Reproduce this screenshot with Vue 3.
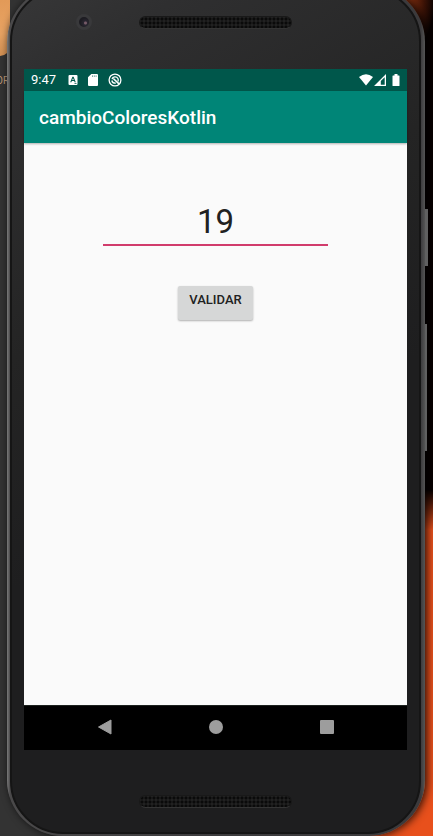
<script setup>
import { ref } from 'vue'

const value = ref('19')
</script>

<template>
  <div class="desktop">
    <div class="glow glow-top"></div>
    <div class="glow glow-bottom"></div>
    <div class="shortcut-icon"></div>
    <span class="shortcut-label">OR</span>

    <div class="phone">
      <div class="side-key power"></div>
      <div class="side-key volume"></div>
      <div class="body">
        <div class="bezel-top">
          <div class="camera"></div>
          <div class="speaker"></div>
        </div>

        <div class="screen">
          <header class="status">
            <span class="clock">9:47</span>
            <svg class="ic" width="10" height="12" viewBox="0 0 10 12">
              <path fill="#fff" fill-rule="evenodd" d="M1.500 1h7q1 0 1 1v8q0 1-1 1h-7q-1 0-1-1V2q0-1 1-1zM4.400 2.800 2.200 8.200h1.200l.4-1.200h2.400l.4 1.200h1.200L5.600 2.800zM5 4.200l.8 1.900H4.200zM6.500 9.200v.8h2v-.8z" />
            </svg>
            <svg class="ic" width="10" height="12" viewBox="0 0 10 12">
              <path fill="#fff" d="M3.300 0H9q1 0 1 1v10q0 1-1 1H1q-1 0-1-1V3.300z" />
              <path stroke="#5d938b" stroke-width=".8" d="M4.500 1.300v1.700M6.300 1.300v1.700M8.100 1.300v1.700" />
            </svg>
            <svg class="ic" width="14" height="14" viewBox="0 0 14 14" fill="none" stroke="#fff">
              <circle cx="7" cy="7" r="5.900" stroke-width="1.300" />
              <path stroke-width="1.300" d="M4 6.200a3.200 3.200 0 0 1 5.900-.7 3.200 3.200 0 0 1 0 3" />
              <path stroke-width="1.600" d="M5.300 5.500 11 10.800" />
              <path stroke-width="1.300" d="M3.800 7.500q.8 2.900 4 2.700" />
            </svg>
            <span class="spacer"></span>
            <svg width="41" height="14" viewBox="0 0 41 14">
              <path fill="#fff" d="M0 4Q7-1.600 14 4L7 12.500z" />
              <path fill="#fff" fill-rule="evenodd" d="M27 1v12H15zM25.700 4.200 21.800 8v3.800h3.900z" />
              <path fill="#fff" d="M35.500 1h3v1.500H40q.5 0 .5.500v9.500q0 .5-.5.500h-6q-.5 0-.5-.5V3q0-.5.500-.5h1.500z" />
            </svg>
          </header>

          <div class="appbar"><h1>cambioColoresKotlin</h1></div>

          <main class="content">
            <input v-model="value" class="field" type="text" inputmode="numeric" aria-label="Valor" />
            <button class="validate" type="button">VALIDAR</button>
          </main>

          <nav class="navbar">
            <button type="button" aria-label="Back">
              <svg width="16" height="16" viewBox="0 0 16 16">
                <path d="M1.500 8 14 1v14z" fill="#9d9d9d" stroke="#9d9d9d" stroke-linejoin="round" />
              </svg>
            </button>
            <button type="button" aria-label="Home">
              <svg width="16" height="16" viewBox="0 0 16 16"><circle cx="8" cy="8" r="7" fill="#9d9d9d" /></svg>
            </button>
            <button type="button" aria-label="Recents">
              <svg width="16" height="16" viewBox="0 0 16 16"><rect x="1" y="1" width="14" height="14" rx="1" fill="#9d9d9d" /></svg>
            </button>
          </nav>
        </div>

        <div class="bezel-bottom"><div class="speaker"></div></div>
      </div>
    </div>
  </div>
</template>

<style>
body {
  margin: 0;
  background: #070101;
}
</style>

<style scoped>
* {
  box-sizing: border-box;
}

.desktop {
  position: relative;
  display: flex;
  min-height: 100vh;
  padding: 0 8px 0 7px;
  overflow: hidden;
  background: linear-gradient(90deg, #333 0 50%, #070101 50%);
  font-family: Roboto, sans-serif;
}

.glow {
  position: absolute;
  right: 0;
}

.glow-top {
  top: 0;
  width: 48px;
  height: 50px;
  background: radial-gradient(ellipse at 40% 0, #a83d13, #3a1206 50%, transparent 75%);
}

.glow-bottom {
  top: 490px;
  bottom: 0;
  width: 100px;
  background: #e8501c;
  mask-image: linear-gradient(transparent, #000 40px);
}

.shortcut-icon {
  position: absolute;
  top: 0;
  left: 0;
  width: 10px;
  height: 56px;
  border-radius: 0 0 10px 0;
  background: linear-gradient(#e29a58, #e8a363 60%, #d29053);
}

.shortcut-label {
  position: absolute;
  top: 74px;
  left: -4px;
  color: #c09a78;
  font-size: 10px;
  line-height: 13px;
}

.phone {
  position: relative;
  display: flex;
  flex: 1;
  min-width: 0;
  margin-top: -14px;
  padding: 2px 4px 2px 3px;
  border-radius: 56px;
  background: linear-gradient(90deg, #7a7a7a, #4a494a 3px, #3d3c3e 50%, #3b3a3c 99%, #555);
  box-shadow: 2px 0 9px rgba(0, 0, 0, 0.85);
}

.side-key {
  position: absolute;
  left: 100%;
  background: #606060;
}

.power {
  top: 223px;
  width: 3px;
  height: 57px;
}

.volume {
  top: 338px;
  width: 2px;
  height: 127px;
}

.body {
  display: flex;
  flex: 1;
  flex-direction: column;
  min-width: 0;
  padding: 0 12px;
  border: 2px solid #151515;
  border-radius: 53px;
  background: linear-gradient(150deg, #373738 0, #2f2f30 90px, #242424 320px, #1e1e1f 520px);
}

.bezel-top {
  position: relative;
  display: flex;
  justify-content: center;
  height: 79px;
  padding-top: 26px;
}

.camera {
  position: absolute;
  top: 24px;
  left: 52px;
  width: 16px;
  height: 16px;
  border: 3px solid #39393b;
  border-radius: 50%;
  background: radial-gradient(circle at 65% 60%, #765b68 0 1px, #292631 2px, #1d1c22 5px);
}

.speaker {
  width: 153px;
  height: 13px;
  border: 1px solid #191919;
  border-bottom-color: #343434;
  border-radius: 7px;
  background: radial-gradient(circle, #0a0a0a 1px, transparent 2px) 0 0 / 4px 4px, #212121;
}

.screen {
  display: flex;
  flex: 1;
  flex-direction: column;
  background: #fafafa;
}

.status {
  display: flex;
  align-items: center;
  height: 22px;
  padding: 0 7px;
  background: #00574b;
  color: #fff;
}

.clock {
  margin-right: 12px;
  font-size: 13px;
  line-height: 22px;
}

.ic {
  margin-right: 10px;
}

.spacer {
  flex: 1;
}

.appbar {
  display: flex;
  align-items: center;
  height: 52px;
  padding: 2px 15px 0;
  background: #008577;
  box-shadow: 0 1px 2px rgba(0, 0, 0, 0.3);
}

h1 {
  margin: 0;
  color: #fff;
  font-size: 19px;
  font-weight: 500;
  line-height: 24px;
}

.content {
  display: flex;
  flex: 1;
  flex-direction: column;
  align-items: center;
  padding-top: 56px;
}

.field {
  width: 225px;
  height: 47px;
  padding: 0;
  border: 0;
  border-bottom: 2px solid #d13c6c;
  outline: 0;
  background: transparent;
  color: #212121;
  font-family: inherit;
  font-size: 33px;
  line-height: 45px;
  text-align: center;
}

.validate {
  width: 75px;
  height: 34px;
  margin-top: 40px;
  padding: 0 0 7px;
  border: 0;
  border-radius: 2px;
  background: #d6d7d7;
  box-shadow: 0 1px 2px rgba(0, 0, 0, 0.3);
  color: #212121;
  font-family: inherit;
  font-size: 13px;
  font-weight: 500;
  line-height: 20px;
}

.navbar {
  display: flex;
  align-items: center;
  justify-content: center;
  gap: 63px;
  height: 45px;
  padding-bottom: 2px;
  border-top: 1px solid #1c211e;
  background: #000;
}

.navbar button {
  display: flex;
  justify-content: center;
  width: 48px;
  padding: 0;
  border: 0;
  background: none;
}

.bezel-bottom {
  display: flex;
  justify-content: center;
  height: 82px;
  padding-top: 45px;
}
</style>
